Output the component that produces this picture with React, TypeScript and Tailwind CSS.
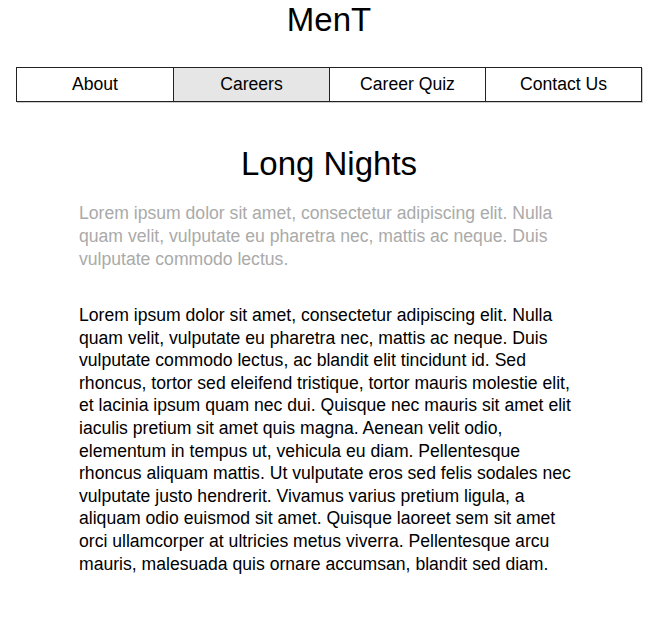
const navItems = ["About", "Careers", "Career Quiz", "Contact Us"];

const intro =
  "Lorem ipsum dolor sit amet, consectetur adipiscing elit. Nulla quam velit, vulputate eu pharetra nec, mattis ac neque. Duis vulputate commodo lectus.";

const body =
  "Lorem ipsum dolor sit amet, consectetur adipiscing elit. Nulla quam velit, vulputate eu pharetra nec, mattis ac neque. Duis vulputate commodo lectus, ac blandit elit tincidunt id. Sed rhoncus, tortor sed eleifend tristique, tortor mauris molestie elit, et lacinia ipsum quam nec dui. Quisque nec mauris sit amet elit iaculis pretium sit amet quis magna. Aenean velit odio, elementum in tempus ut, vehicula eu diam. Pellentesque rhoncus aliquam mattis. Ut vulputate eros sed felis sodales nec vulputate justo hendrerit. Vivamus varius pretium ligula, a aliquam odio euismod sit amet. Quisque laoreet sem sit amet orci ullamcorper at ultricies metus viverra. Pellentesque arcu mauris, malesuada quis ornare accumsan, blandit sed diam.";

export default function App() {
  return (
    <div className="w-[658px] bg-white text-black font-['Liberation_Sans',Arial,sans-serif] pb-12">
      <h1 className="text-center text-[33px] leading-[37px] pt-px">MenT</h1>

      <nav className="mx-4 mt-[29px] grid grid-cols-4 border border-[#222] shadow-[1px_1px_0_#ccc]">
        {navItems.map((item, i) => (
          <a
            key={item}
            href="#"
            className={`h-[33px] flex items-center justify-center text-[17.6px] ${
              i > 0 ? "border-l border-[#222]" : ""
            } ${item === "Careers" ? "bg-[#e6e6e6]" : "bg-white"}`}
          >
            {item}
          </a>
        ))}
      </nav>

      <main className="w-[500px] mx-auto mt-[43px]">
        <h2 className="text-center text-[33px] leading-[37px]">Long Nights</h2>
        <p className="mt-[20px] text-[17.6px] leading-[23px] text-[#aaaaaa]">{intro}</p>
        <p className="mt-[33px] text-[17.6px] leading-[22.6px] text-black">{body}</p>
      </main>
    </div>
  );
}
